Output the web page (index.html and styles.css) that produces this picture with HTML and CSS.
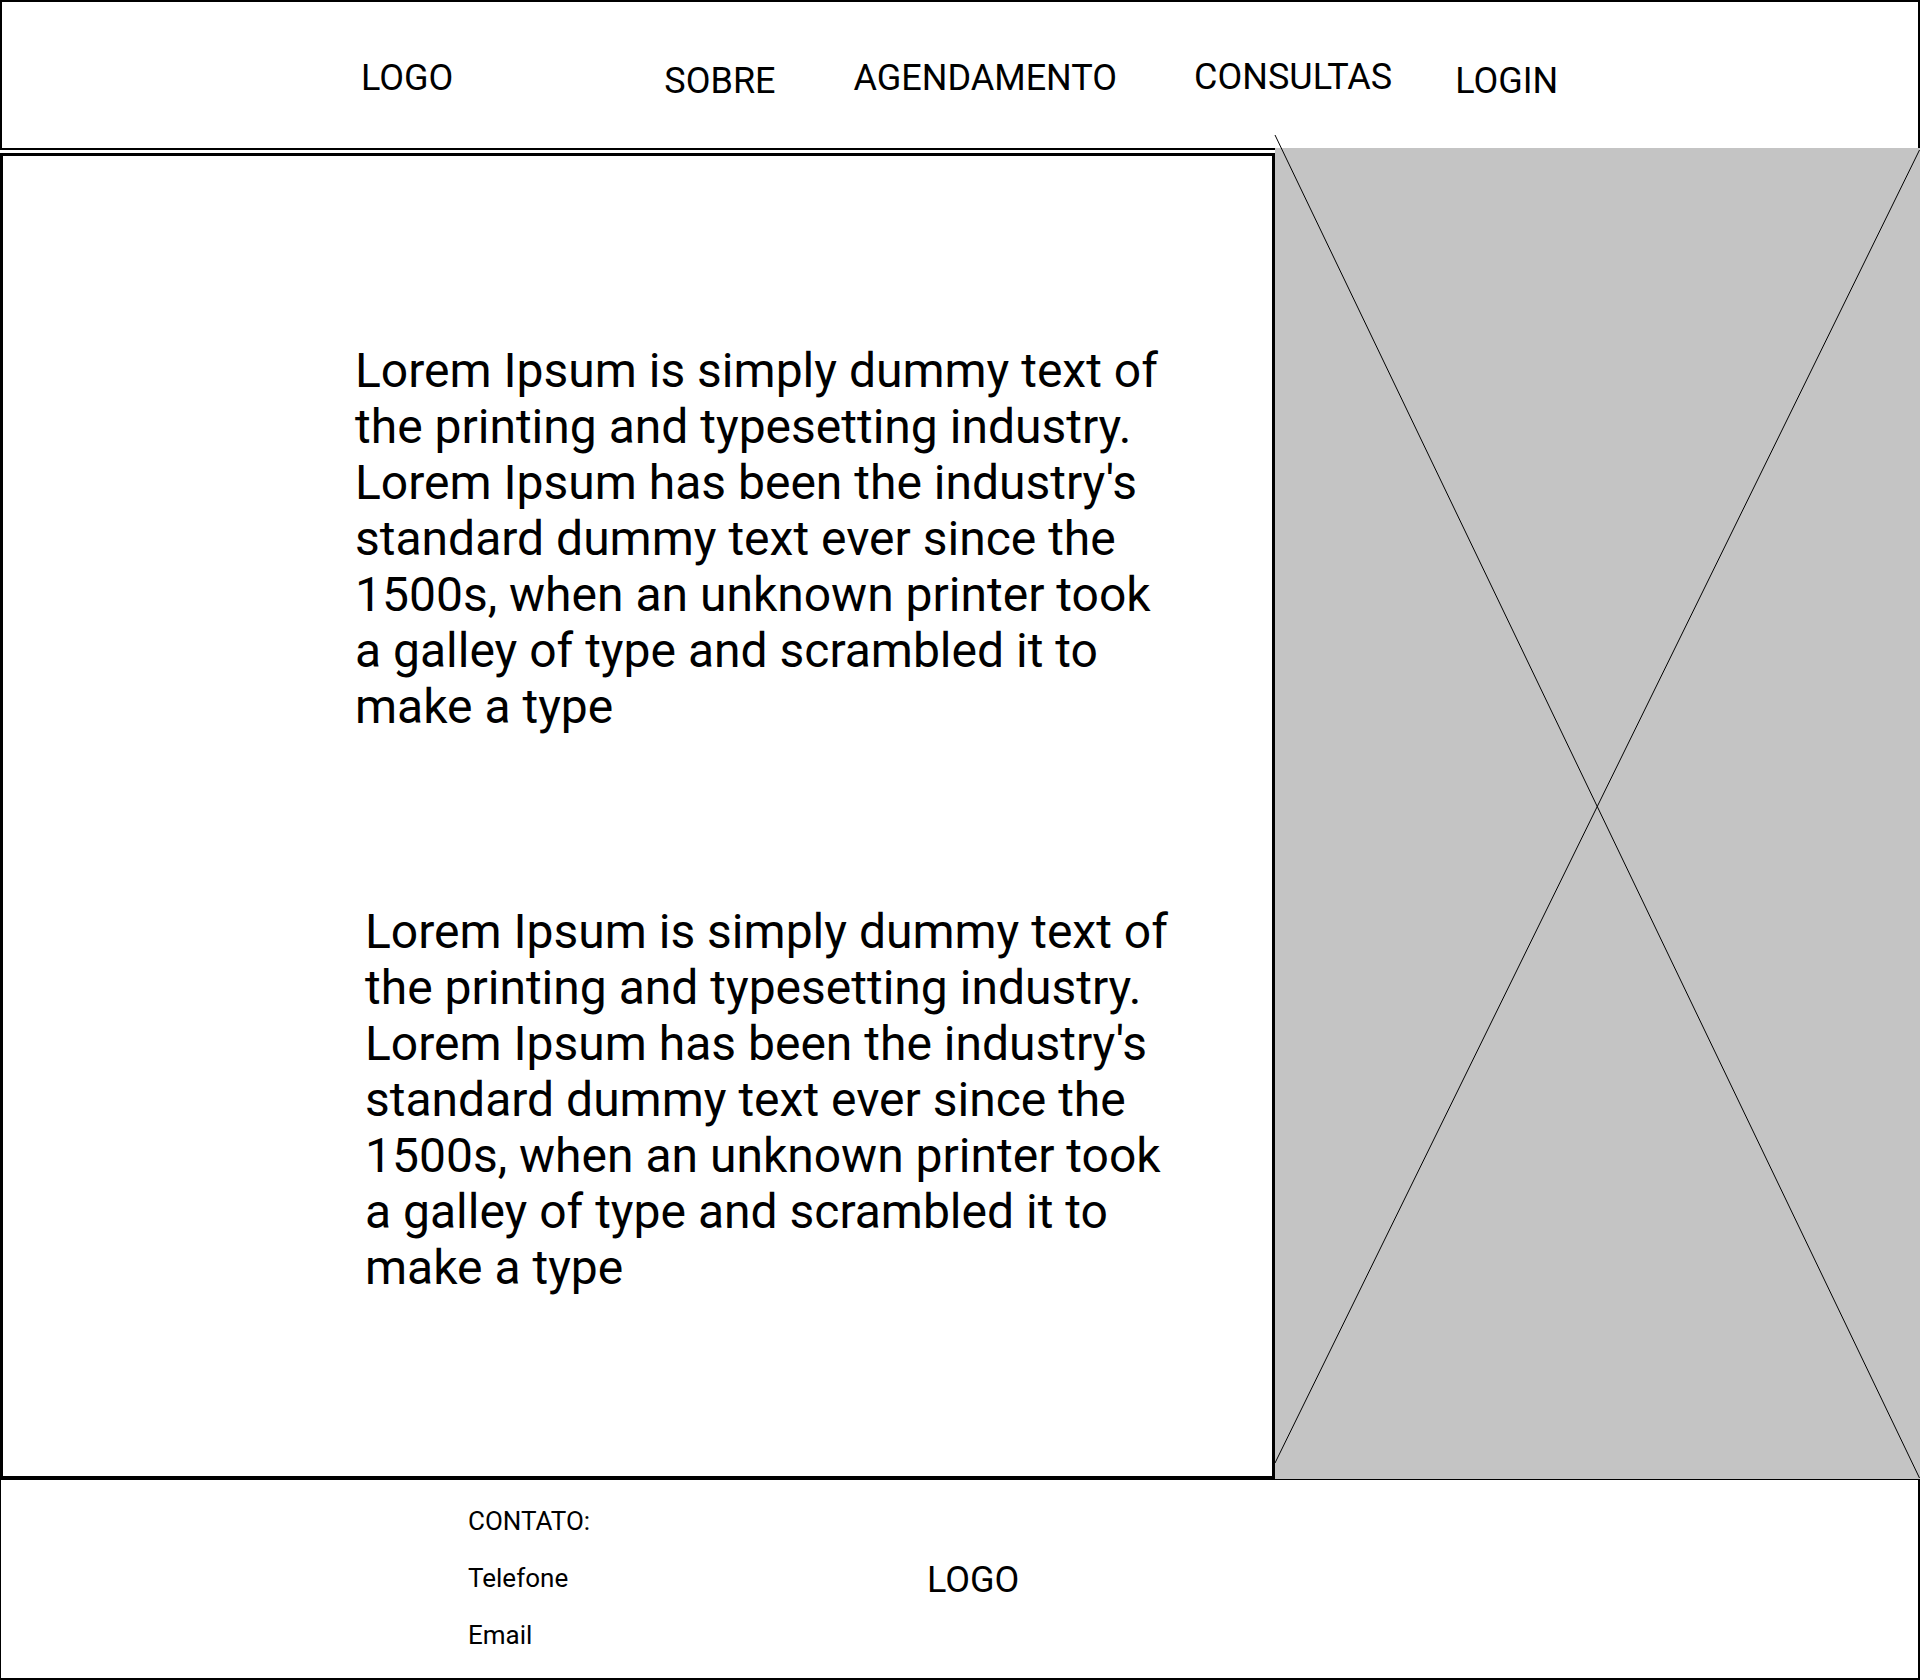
FILE: index.html
```html
<!DOCTYPE html>
<html lang="pt">
<head>
<meta charset="utf-8">
<title>Wireframe</title>
<link rel="stylesheet" href="styles.css">
</head>
<body>
<header class="topbar">
  <span class="nav-item logo">LOGO</span>
  <span class="nav-item sobre">SOBRE</span>
  <span class="nav-item agend">AGENDAMENTO</span>
  <span class="nav-item consultas">CONSULTAS</span>
  <span class="nav-item login">LOGIN</span>
</header>
<main class="main">
  <section class="left">
    <div class="content">
      <p class="text t1">Lorem Ipsum is simply dummy text of the printing and typesetting industry. Lorem Ipsum has been the industry's standard dummy text ever since the 1500s, when an unknown printer took a galley of type and scrambled it to make a type</p>
      <p class="text t2">Lorem Ipsum is simply dummy text of the printing and typesetting industry. Lorem Ipsum has been the industry's standard dummy text ever since the 1500s, when an unknown printer took a galley of type and scrambled it to make a type</p>
    </div>
  </section>
  <div class="placeholder">
    <svg class="cross" width="646" height="1344" viewBox="0 0 646 1344">
      <line x1="0" y1="0" x2="644.5" y2="1343" stroke="#000" stroke-width="1"/>
      <line x1="644.5" y1="15" x2="0" y2="1328" stroke="#000" stroke-width="1"/>
    </svg>
  </div>
</main>
<footer class="footer">
  <div class="contact">
    <div>CONTATO:</div>
    <div>Telefone</div>
    <div>Email</div>
  </div>
  <div class="flogo">LOGO</div>
</footer>
</body>
</html>
```

FILE: styles.css
```css
body {
  margin: 0;
  font-family: Roboto, "Liberation Sans", sans-serif;
  color: #000;
  background: #fff;
}

.topbar {
  box-sizing: border-box;
  height: 148px;
  border: 2px solid #000;
  border-bottom: 0;
  display: flex;
  align-items: flex-start;
  padding-left: 359px;
  font-size: 36px;
  line-height: normal;
}

.nav-item { white-space: nowrap; }
.logo { margin-top: 55px; }
.sobre { margin-left: 211px; margin-top: 58px; }
.agend { margin-left: 78px; margin-top: 55px; }
.consultas { margin-left: 77px; margin-top: 54px; }
.login { margin-left: 63px; margin-top: 58px; }

.main {
  display: flex;
  height: 1331px;
}

.left {
  box-sizing: border-box;
  width: 1275px;
  border-top: 2px solid #000;
  padding-top: 3px;
}

.content {
  box-sizing: border-box;
  height: 1326px;
  border: 3px solid #000;
  padding-top: 187px;
}

.text {
  margin: 0;
  width: 820px;
  font-size: 48px;
  line-height: 56px;
}

.t1 { margin-left: 352px; }
.t2 { margin-left: 362px; margin-top: 169px; }

.placeholder {
  flex: 1;
  background: #c4c4c4;
  position: relative;
}

.cross {
  position: absolute;
  left: 0;
  top: -13px;
  overflow: visible;
}

.footer {
  box-sizing: border-box;
  height: 201px;
  border-top: 1px solid #000;
  border-left: 1px solid #000;
  border-right: 2px solid #000;
  border-bottom: 2px solid #000;
  display: flex;
  align-items: flex-start;
  padding-left: 467px;
  padding-top: 13px;
}

.contact {
  width: 459px;
  font-size: 26px;
  line-height: 57px;
}

.flogo {
  font-size: 36px;
  line-height: normal;
  margin-top: 66px;
}
```
